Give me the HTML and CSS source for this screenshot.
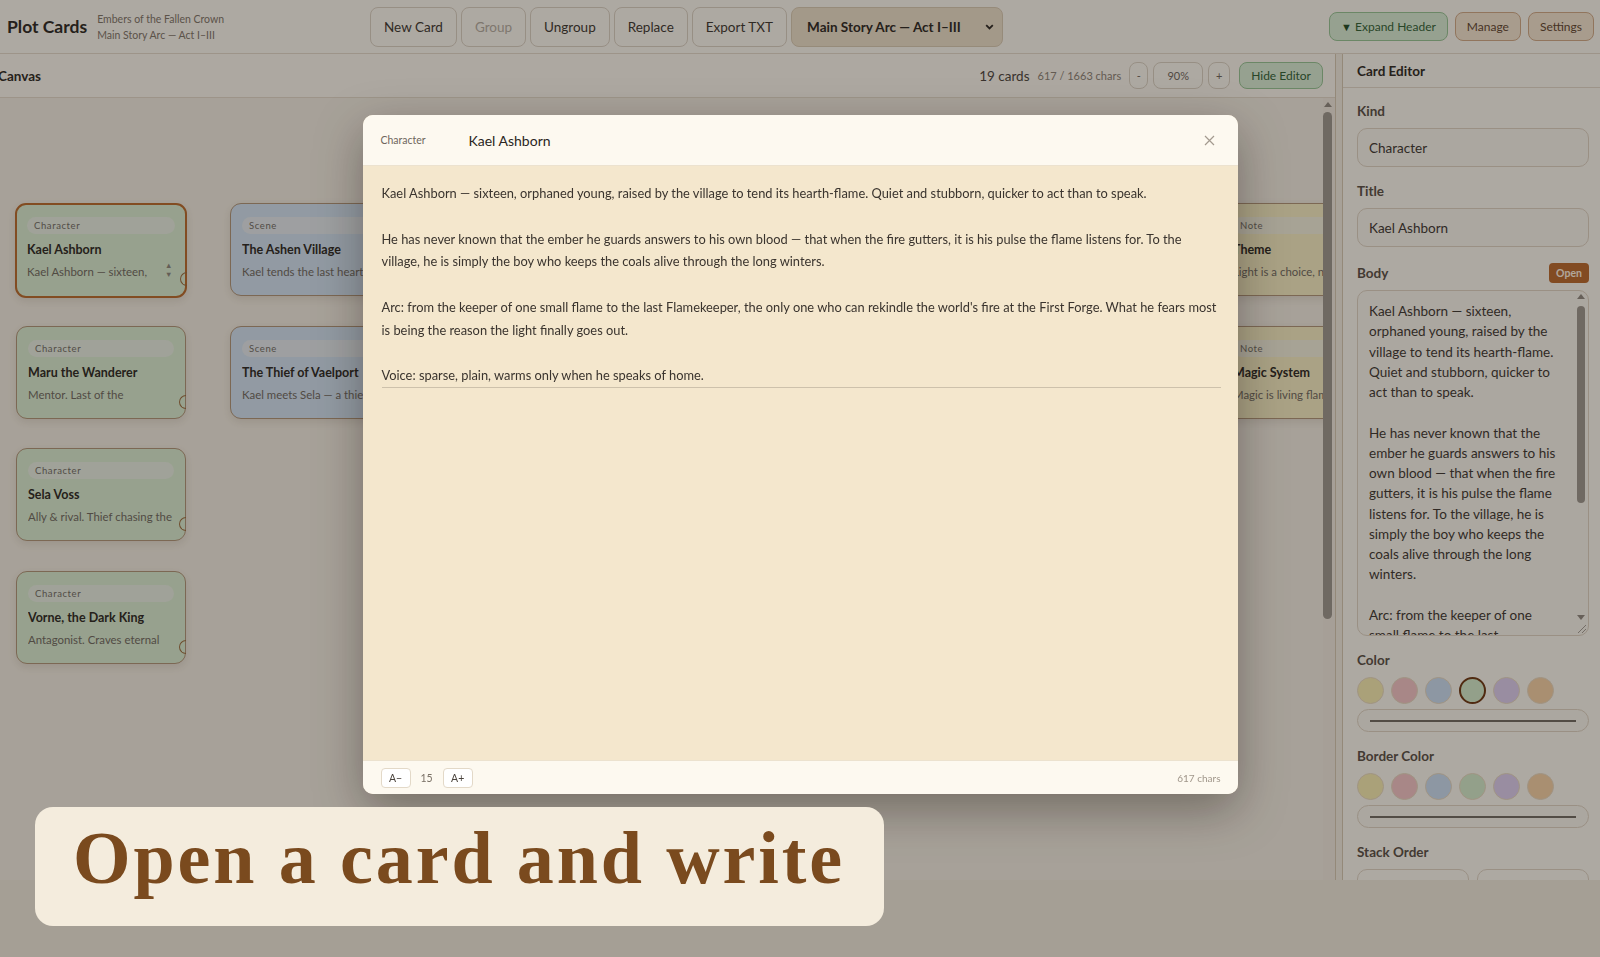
FILE: index.html
```html
<!DOCTYPE html>
<html lang="en">
<head>
    <meta charset="UTF-8">
    <meta name="viewport" content="width=device-width, initial-scale=1.0">
    <title>Plot Cards</title>
    <link rel="stylesheet" href="styles.css">
</head>
<body>
    <div class="app">
        <header class="topbar">
            <div class="brand">
                <h1>Plot Cards</h1>
                <div class="project">
                    <span>Embers of the Fallen Crown</span>
                    <span>Main Story Arc — Act I–III</span>
                </div>
            </div>
            <nav class="actions">
                <button class="btn">New Card</button>
                <button class="btn" disabled>Group</button>
                <button class="btn">Ungroup</button>
                <button class="btn">Replace</button>
                <button class="btn">Export TXT</button>
                <div class="board-select">
                    <span>Main Story Arc — Act I–III</span>
                    <svg width="9" height="6" viewBox="0 0 9 6"><path d="M1.2 1.2 4.5 4.5 7.8 1.2" fill="none" stroke="#2a2622" stroke-width="1.8"/></svg>
                </div>
            </nav>
            <div class="header-right">
                <button class="pill-btn green"><span class="tri">▼</span> Expand Header</button>
                <button class="pill-btn tan">Manage</button>
                <button class="pill-btn tan">Settings</button>
            </div>
        </header>

        <div class="workspace">
            <section class="canvas-panel">
                <div class="canvas-toolbar">
                    <h2>Canvas</h2>
                    <div class="canvas-stats">
                        <span class="count">19 cards</span>
                        <span class="chars">617 / 1663 chars</span>
                        <button class="mini">-</button>
                        <button class="mini zoom">90%</button>
                        <button class="mini plus">+</button>
                        <button class="mini green">Hide Editor</button>
                    </div>
                </div>
                <div class="canvas-wrap">
                    <div class="canvas">
                        <!-- column 1 -->
                        <div class="card character selected" style="left:15px;top:105px">
                            <div class="card-kind">Character</div>
                            <div class="card-title">Kael Ashborn</div>
                            <div class="card-text">Kael Ashborn — sixteen, orphaned young, raised by the village to tend its hearth-flame.</div>
                            <span class="card-scroll">▲<br>▼</span>
                            <span class="knob"></span>
                        </div>
                        <div class="card character" style="left:16px;top:228px">
                            <div class="card-kind">Character</div>
                            <div class="card-title">Maru the Wanderer</div>
                            <div class="card-text">Mentor. Last of the Emberwardens, half-blind and still walking.</div>
                            <span class="knob"></span>
                        </div>
                        <div class="card character" style="left:16px;top:350px">
                            <div class="card-kind">Character</div>
                            <div class="card-title">Sela Voss</div>
                            <div class="card-text">Ally &amp; rival. Thief chasing the crown's lost shards for her own reasons.</div>
                            <span class="knob"></span>
                        </div>
                        <div class="card character" style="left:16px;top:473px">
                            <div class="card-kind">Character</div>
                            <div class="card-title">Vorne, the Dark King</div>
                            <div class="card-text">Antagonist. Craves eternal darkness so nothing can ever be lost again.</div>
                            <span class="knob"></span>
                        </div>

                        <!-- column 2 -->
                        <div class="card scene" style="left:230px;top:105px">
                            <div class="card-kind">Scene</div>
                            <div class="card-title">The Ashen Village</div>
                            <div class="card-text">Kael tends the last hearth while the valley goes cold.</div>
                            <span class="knob"></span>
                        </div>
                        <div class="card scene" style="left:230px;top:228px">
                            <div class="card-kind">Scene</div>
                            <div class="card-title">The Thief of Vaelport</div>
                            <div class="card-text">Kael meets Sela — a thief with a shard of the crown.</div>
                            <span class="knob"></span>
                        </div>

                        <!-- columns behind the open card -->
                        <div class="card scene" style="left:445px;top:105px">
                            <div class="card-kind">Scene</div>
                            <div class="card-title">The Flame Gutters</div>
                            <div class="card-text">Night falls early. The hearth answers Kael alone.</div>
                        </div>
                        <div class="card scene" style="left:445px;top:228px">
                            <div class="card-kind">Scene</div>
                            <div class="card-title">Road to the Forge</div>
                            <div class="card-text">Maru leads them north through the burned pass.</div>
                        </div>
                        <div class="card scene" style="left:445px;top:350px">
                            <div class="card-kind">Scene</div>
                            <div class="card-title">The Broken Bridge</div>
                            <div class="card-text">Sela chooses the shard over the crossing.</div>
                        </div>
                        <div class="card scene" style="left:660px;top:105px">
                            <div class="card-kind">Scene</div>
                            <div class="card-title">Ash Market</div>
                            <div class="card-text">A trade of secrets for a map of the old roads.</div>
                        </div>
                        <div class="card scene" style="left:660px;top:228px">
                            <div class="card-kind">Scene</div>
                            <div class="card-title">Maru Falls</div>
                            <div class="card-text">The mentor stays behind to hold the gate.</div>
                        </div>
                        <div class="card scene" style="left:660px;top:350px">
                            <div class="card-kind">Scene</div>
                            <div class="card-title">Vorne's Offer</div>
                            <div class="card-text">Peace without fire. Kael almost says yes.</div>
                        </div>
                        <div class="card scene" style="left:660px;top:473px">
                            <div class="card-kind">Scene</div>
                            <div class="card-title">The Cold Court</div>
                            <div class="card-text">Sela's betrayal, or her rescue.</div>
                        </div>
                        <div class="card scene" style="left:875px;top:105px">
                            <div class="card-kind">Scene</div>
                            <div class="card-title">The First Forge</div>
                            <div class="card-text">Kael rekindles the world's fire.</div>
                        </div>
                        <div class="card scene" style="left:875px;top:228px">
                            <div class="card-kind">Scene</div>
                            <div class="card-title">Dawn Returns</div>
                            <div class="card-text">The village wakes to a warm morning.</div>
                        </div>
                        <div class="card note" style="left:875px;top:350px">
                            <div class="card-kind">Note</div>
                            <div class="card-title">World Map</div>
                            <div class="card-text">Valley, pass, Vaelport, the Cold Court.</div>
                        </div>
                        <div class="card note" style="left:875px;top:473px">
                            <div class="card-kind">Note</div>
                            <div class="card-title">Timeline</div>
                            <div class="card-text">Three winters across three acts.</div>
                        </div>

                        <!-- notes column -->
                        <div class="card note" style="left:1221px;top:105px">
                            <div class="card-kind">Note</div>
                            <div class="card-title">Theme</div>
                            <div class="card-text">Light is a choice, not an inheritance.</div>
                        </div>
                        <div class="card note" style="left:1221px;top:228px">
                            <div class="card-kind">Note</div>
                            <div class="card-title">Magic System</div>
                            <div class="card-text">Magic is living flame, bound to blood.</div>
                        </div>
                    </div>
                    <div class="vscroll">
                        <span class="vscroll-arrow"></span>
                        <span class="vscroll-thumb"></span>
                    </div>
                </div>
            </section>

            <div class="splitter"></div>

            <aside class="editor">
                <h2 class="editor-title">Card Editor</h2>
                <div class="editor-body">
                    <div class="field">
                        <label>Kind</label>
                        <input type="text" value="Character">
                    </div>
                    <div class="field">
                        <label>Title</label>
                        <input type="text" value="Kael Ashborn">
                    </div>
                    <div class="field">
                        <div class="label-row">
                            <label>Body</label>
                            <button class="open-btn">Open</button>
                        </div>
                        <div class="body-box">
                            <div class="body-text">Kael Ashborn — sixteen, orphaned young, raised by the village to tend its hearth-flame. Quiet and stubborn, quicker to act than to speak.

He has never known that the ember he guards answers to his own blood — that when the fire gutters, it is his pulse the flame listens for. To the village, he is simply the boy who keeps the coals alive through the long winters.

Arc: from the keeper of one small flame to the last Flamekeeper, the only one who can rekindle the world's fire at the First Forge.</div>
                            <div class="body-scroll">
                                <span class="arrow-up"></span>
                                <span class="thumb"></span>
                                <span class="arrow-down"></span>
                                <span class="grip"></span>
                            </div>
                        </div>
                    </div>
                    <div class="field">
                        <label>Color</label>
                        <div class="swatches">
                            <span class="swatch yellow"></span>
                            <span class="swatch pink"></span>
                            <span class="swatch blue"></span>
                            <span class="swatch green active"></span>
                            <span class="swatch purple"></span>
                            <span class="swatch orange"></span>
                        </div>
                        <div class="color-line"><span></span></div>
                    </div>
                    <div class="field">
                        <label>Border Color</label>
                        <div class="swatches">
                            <span class="swatch yellow"></span>
                            <span class="swatch pink"></span>
                            <span class="swatch blue"></span>
                            <span class="swatch green"></span>
                            <span class="swatch purple"></span>
                            <span class="swatch orange"></span>
                        </div>
                        <div class="color-line"><span></span></div>
                    </div>
                    <div class="field">
                        <label>Stack Order</label>
                        <div class="stack-row">
                            <button class="stack-btn">Bring Forward</button>
                            <button class="stack-btn">Send Back</button>
                        </div>
                    </div>
                </div>
            </aside>
        </div>
    </div>

    <div class="backdrop">
        <div class="modal">
            <div class="modal-head">
                <span class="modal-kind">Character</span>
                <span class="modal-title">Kael Ashborn</span>
                <button class="close" aria-label="Close">
                    <svg width="11" height="11" viewBox="0 0 11 11"><path d="M1 1 10 10M10 1 1 10" stroke="#a39a8f" stroke-width="1.2"/></svg>
                </button>
            </div>
            <div class="modal-body">
                <div class="modal-text">Kael Ashborn — sixteen, orphaned young, raised by the village to tend its hearth-flame. Quiet and stubborn, quicker to act than to speak.

He has never known that the ember he guards answers to his own blood — that when the fire gutters, it is his pulse the flame listens for. To the village, he is simply the boy who keeps the coals alive through the long winters.

Arc: from the keeper of one small flame to the last Flamekeeper, the only one who can rekindle the world's fire at the First Forge. What he fears most is being the reason the light finally goes out.

Voice: sparse, plain, warms only when he speaks of home.</div>
            </div>
            <div class="modal-foot">
                <button class="font-btn">A−</button>
                <span class="font-size">15</span>
                <button class="font-btn">A+</button>
                <span class="modal-count">617 chars</span>
            </div>
        </div>
    </div>

    <div class="caption">Open a card and write</div>
</body>
</html>
```

FILE: styles.css
```css
* {
    box-sizing: border-box;
}

body {
    margin: 0;
    height: 957px;
    overflow: hidden;
    font-family: Lato, "Open Sans", sans-serif;
    color: #2b2723;
    background-color: #efe8dc;
}

button {
    font-family: inherit;
    cursor: pointer;
}

.app {
    height: 880px;
    display: flex;
    flex-direction: column;
    background-color: #fbf7f0;
    overflow: hidden;
}

/* header */
.topbar {
    height: 54px;
    flex-shrink: 0;
    display: flex;
    align-items: center;
    padding: 0 6px 0 7px;
    border-bottom: 1px solid #e2d8c9;
    background-color: #fbf7f0;
}

.brand {
    display: flex;
    align-items: center;
    gap: 10px;
    width: 363px;
}

.brand h1 {
    margin: 0;
    font-size: 17.5px;
    font-weight: 700;
    color: #2a2622;
}

.project {
    display: flex;
    flex-direction: column;
    font-size: 10.5px;
    line-height: 16px;
    color: #7d7368;
}

.actions {
    display: flex;
    align-items: center;
    gap: 4px;
}

.btn {
    height: 40px;
    padding: 0 13px;
    font-size: 13.5px;
    color: #3a352f;
    background-color: #fbf7f0;
    border: 1px solid #d9d0c2;
    border-radius: 8px;
}

.btn:disabled {
    color: #b3aba0;
    cursor: default;
}

.board-select {
    width: 212px;
    height: 40px;
    display: flex;
    align-items: center;
    justify-content: space-between;
    padding: 0 8px 0 15px;
    font-size: 13.5px;
    font-weight: 700;
    color: #2a2622;
    background-color: #ecdfc9;
    border: 1px solid #d8cab3;
    border-radius: 8px;
}

.header-right {
    margin-left: auto;
    display: flex;
    gap: 7px;
}

.pill-btn {
    height: 29px;
    padding: 0 11px;
    font-size: 12px;
    border-radius: 8px;
}

.pill-btn.green {
    color: #2f5e34;
    background-color: #d8ecd5;
    border: 1px solid #96c394;
}

.pill-btn .tri {
    font-size: 11px;
    color: #1f4a25;
}

.pill-btn.tan {
    color: #5e4430;
    background-color: #f3e3cf;
    border: 1px solid #cfa886;
}

/* workspace */
.workspace {
    flex: 1;
    display: flex;
    min-height: 0;
}

.canvas-panel {
    width: 1336px;
    display: flex;
    flex-direction: column;
    border-right: 1px solid #d5c7b1;
    background-color: #f2ece2;
}

.canvas-toolbar {
    height: 44px;
    flex-shrink: 0;
    display: flex;
    align-items: center;
    justify-content: space-between;
    padding: 0 12px 0 0;
    border-bottom: 1px solid #e2d8c9;
    background-color: #faf6ee;
}

.canvas-toolbar h2 {
    margin: 0 0 0 -2px;
    font-size: 13.5px;
    font-weight: 700;
}

.canvas-stats {
    display: flex;
    align-items: center;
    gap: 5px;
}

.count {
    font-size: 13.5px;
    color: #4a433c;
    margin-right: 3px;
}

.chars {
    font-size: 11px;
    color: #8a8075;
    margin-right: 3px;
}

.mini {
    height: 27px;
    min-width: 19px;
    padding: 0 6px;
    font-size: 11px;
    color: #6d655c;
    background-color: #fbf7f0;
    border: 1px solid #d9d0c2;
    border-radius: 8px;
}

.mini.zoom {
    width: 50px;
}

.mini.plus {
    width: 22px;
}

.mini.green {
    margin-left: 4px;
    padding: 0 11px;
    font-size: 12px;
    color: #2f5e34;
    background-color: #d8ecd5;
    border-color: #96c394;
}

.canvas-wrap {
    flex: 1;
    display: flex;
    min-height: 0;
}

.canvas {
    position: relative;
    flex: 1;
    overflow: hidden;
}

.vscroll {
    position: relative;
    width: 12px;
    background-color: #f0e9df;
}

.vscroll-arrow {
    position: absolute;
    top: 4px;
    left: 1px;
    border-left: 4px solid transparent;
    border-right: 4px solid transparent;
    border-bottom: 5px solid #8f8880;
}

.vscroll-thumb {
    position: absolute;
    top: 14px;
    left: 0;
    width: 9px;
    height: 507px;
    border-radius: 5px;
    background-color: #9c958e;
}

/* cards */
.card {
    position: absolute;
    width: 170px;
    height: 93px;
    padding: 13px 11px 0 11px;
    border: 1px solid #b09478;
    border-radius: 11px;
    box-shadow: 0 3px 8px rgba(70, 50, 30, 0.12);
}

.card.character {
    background-color: #d9ecd1;
}

.card.scene {
    background-color: #d1e1f1;
}

.card.note {
    background-color: #f6edc3;
}

.card.selected {
    width: 172px;
    height: 95px;
    padding: 12px 10px 0 10px;
    border: 2px solid #b8692b;
}

.card-kind {
    height: 17px;
    line-height: 17px;
    padding: 0 7px;
    border-radius: 9px;
    font-size: 9.5px;
    letter-spacing: 0.6px;
    color: #6f6a63;
    background-color: rgba(238, 238, 236, 0.6);
}

.card-title {
    margin-top: 8px;
    font-size: 12.5px;
    line-height: 16px;
    font-weight: 700;
    color: #2a2622;
    white-space: nowrap;
    overflow: hidden;
}

.card-text {
    margin-top: 6px;
    height: 19px;
    overflow: hidden;
    font-size: 11.4px;
    line-height: 16px;
    color: #6e675f;
}

.card.selected .card-text {
    padding-right: 22px;
}

.card-scroll {
    position: absolute;
    left: 148px;
    top: 56px;
    font-size: 7.5px;
    line-height: 9px;
    color: #8b857c;
}

.knob {
    position: absolute;
    right: -1px;
    top: 68px;
    width: 7px;
    height: 14px;
    border: 1.5px solid #9b6a3e;
    border-right: none;
    border-radius: 7px 0 0 7px;
}

.card.selected .knob {
    right: -2px;
    top: 67px;
}

/* editor */
.splitter {
    width: 6px;
    background-color: #f2ebe0;
}

.editor {
    flex: 1;
    display: flex;
    flex-direction: column;
    border-left: 1px solid #d5c7b1;
    background-color: #fbf7f0;
}

.editor-title {
    margin: 0;
    height: 34px;
    line-height: 34px;
    padding: 0 14px;
    font-size: 13.5px;
    font-weight: 700;
    border-bottom: 1px solid #e2d8c9;
}

.editor-body {
    display: flex;
    flex-direction: column;
    gap: 16px;
    padding: 15px 11px 0 14px;
}

.field label {
    display: block;
    margin-bottom: 8px;
    font-size: 13.5px;
    line-height: 17px;
    font-weight: 700;
    color: #574e45;
}

.field input {
    width: 100%;
    height: 39px;
    padding: 0 11px;
    font-family: inherit;
    font-size: 13.5px;
    color: #3b3530;
    background-color: #f8f4ed;
    border: 1px solid #ddd2c2;
    border-radius: 10px;
}

.label-row {
    display: flex;
    align-items: center;
    justify-content: space-between;
    height: 20px;
    margin-bottom: 7px;
}

.label-row label {
    margin-bottom: 0;
}

.open-btn {
    height: 20px;
    padding: 0 7px;
    font-size: 10.5px;
    font-weight: 700;
    color: #fff3e4;
    background-color: #b9672b;
    border: none;
    border-radius: 4px;
}

.body-box {
    height: 346px;
    display: flex;
    background-color: #f8f4ed;
    border: 1px solid #ddd2c2;
    border-radius: 10px;
    overflow: hidden;
}

.body-text {
    flex: 1;
    padding: 10px 14px 0 11px;
    font-size: 13.5px;
    line-height: 20.25px;
    color: #3b3530;
    white-space: pre-wrap;
    overflow: hidden;
}

.body-scroll {
    position: relative;
    width: 15px;
}

.body-scroll .arrow-up,
.body-scroll .arrow-down {
    position: absolute;
    left: 4px;
    border-left: 4px solid transparent;
    border-right: 4px solid transparent;
}

.body-scroll .arrow-up {
    top: 3px;
    border-bottom: 5px solid #8f8880;
}

.body-scroll .arrow-down {
    bottom: 15px;
    border-top: 5px solid #8f8880;
}

.body-scroll .thumb {
    position: absolute;
    top: 15px;
    left: 4px;
    width: 8px;
    height: 197px;
    border-radius: 4px;
    background-color: #9c958e;
}

.body-scroll .grip {
    position: absolute;
    right: 2px;
    bottom: 2px;
    width: 8px;
    height: 8px;
    background: linear-gradient(135deg, transparent 45%, #a39c94 46%, #a39c94 54%, transparent 55%, transparent 70%, #a39c94 71%, #a39c94 79%, transparent 80%);
}

.swatches {
    display: flex;
    gap: 7px;
    margin-bottom: 5px;
}

.swatch {
    width: 27px;
    height: 27px;
    border-radius: 50%;
    border: 1.5px solid #e6d7c0;
}

.swatch.yellow { background-color: #f6ebb1; }
.swatch.pink { background-color: #f3c4c7; }
.swatch.blue { background-color: #c9dcf2; }
.swatch.green { background-color: #d3eacb; }
.swatch.purple { background-color: #dccdef; }
.swatch.orange { background-color: #f4cfa5; }

.swatch.active {
    border: 2px solid #6c3511;
}

.color-line {
    height: 23px;
    display: flex;
    align-items: center;
    padding: 0 12px;
    background-color: #f8f4ed;
    border: 1px solid #ddd2c2;
    border-radius: 12px;
}

.color-line span {
    flex: 1;
    height: 2px;
    background-color: #6f6962;
}

.stack-row {
    display: grid;
    grid-template-columns: 1fr 1fr;
    gap: 8px;
}

.stack-btn {
    height: 34px;
    font-size: 12px;
    color: transparent;
    background-color: #fbf7f0;
    border: 1px solid #ddd2c2;
    border-radius: 10px;
}

/* open card */
.backdrop {
    position: fixed;
    inset: 0;
    display: flex;
    justify-content: center;
    align-items: flex-start;
    padding-top: 115px;
    background-color: rgba(30, 24, 18, 0.35);
}

.modal {
    width: 875px;
    height: 679px;
    display: flex;
    flex-direction: column;
    background-color: #f4e7cd;
    border-radius: 10px;
    overflow: hidden;
    box-shadow: 0 16px 48px rgba(20, 12, 4, 0.35);
}

.modal-head {
    height: 51px;
    flex-shrink: 0;
    display: flex;
    align-items: center;
    padding: 0 18px;
    background-color: #fdf9f0;
    border-bottom: 1px solid #ece2cf;
}

.modal-kind {
    width: 88px;
    font-size: 10.5px;
    color: #6f665c;
}

.modal-title {
    font-size: 14px;
    color: #2a2622;
}

.close {
    margin-left: auto;
    margin-right: 5px;
    padding: 0;
    display: flex;
    background: none;
    border: none;
}

.modal-body {
    flex: 1;
    padding: 16px 17px 16px 19px;
}

.modal-text {
    font-size: 12.85px;
    line-height: 22.75px;
    color: #3a342e;
    white-space: pre-wrap;
    border-bottom: 1px solid #cdc1ab;
}

.modal-foot {
    height: 34px;
    flex-shrink: 0;
    display: flex;
    align-items: center;
    gap: 10px;
    padding: 0 17px 0 18px;
    background-color: #fdf9f0;
    border-top: 1px solid #ece2cf;
}

.font-btn {
    width: 30px;
    height: 20px;
    padding: 0;
    font-size: 10.5px;
    color: #4a433c;
    background-color: #ffffff;
    border: 1px solid #e3d9c8;
    border-radius: 4px;
}

.font-size {
    font-size: 10.5px;
    color: #7a7166;
}

.modal-count {
    margin-left: auto;
    font-size: 10px;
    color: #a0968a;
}

/* caption */
.caption {
    position: absolute;
    left: 35px;
    top: 807px;
    width: 849px;
    height: 119px;
    padding: 14px 0 0 38px;
    border-radius: 18px;
    background-color: #f4ecdd;
    font-family: "Liberation Serif", "Times New Roman", serif;
    font-size: 74px;
    line-height: 74px;
    font-weight: 700;
    letter-spacing: 2.9px;
    color: #7a4a1e;
}
```
